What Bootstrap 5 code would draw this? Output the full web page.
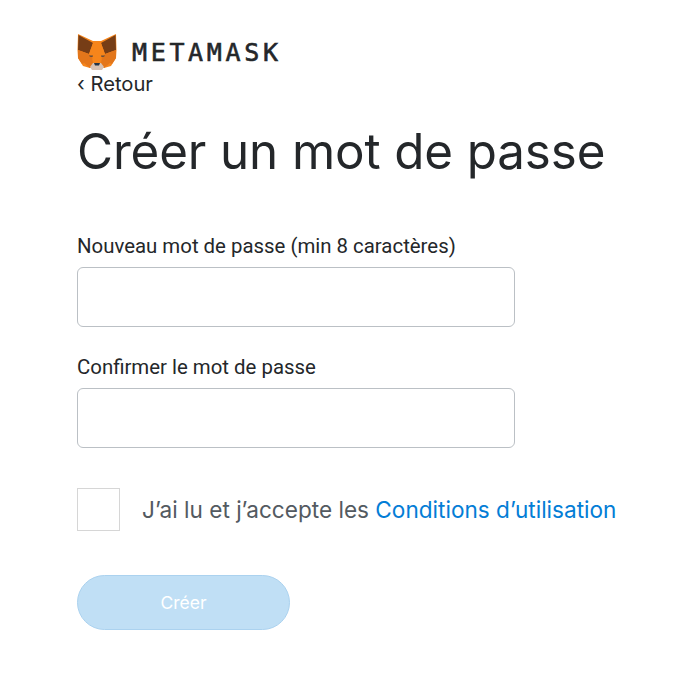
<!DOCTYPE html>
<html lang="fr"><head><meta charset="utf-8"><title>MetaMask</title>
<link rel="stylesheet" href="https://cdn.jsdelivr.net/npm/bootstrap@5.3.0/dist/css/bootstrap.min.css">
<style>
body{background:#fff;color:#24272a;font-family:Inter,sans-serif}
.page-wrap{padding:33px 0 0 77px;width:690px}
.brand-row{height:37px}
.fox-logo{width:40px;height:37px;display:block}
.brand-word{font-family:"DejaVu Sans Mono",monospace;font-weight:400;-webkit-text-stroke:.6px #24272a;font-size:25px;letter-spacing:3.65px;color:#24272a;margin:2px 0 0 15px;line-height:37px}
.back-link{font-size:20.2px;line-height:24px;color:#24272a;text-decoration:none;display:block;margin-top:2px}
.page-title{font-size:49.3px;font-weight:400;line-height:60px;margin:25px 0 0 0;letter-spacing:-.1px}
.field-label{font-family:Roboto,sans-serif;font-size:20.4px;line-height:24px;margin-bottom:9px;display:block;color:#24272a}
.first-field{margin-top:53px}
.next-field{margin-top:28px}
.pw-input{width:438px;height:60px;border:1px solid #bbc0c5;border-radius:6px}
.terms-row{margin-top:40px}
.terms-box{appearance:none;width:43px;height:43px;border:1px solid #d6d6d6;background:#fff;margin:0 22px 0 0;flex:none;display:block}
.terms-text{font-size:22.6px;color:#535a61;white-space:nowrap}
.terms-link{color:#037dd6;text-decoration:none}
.btn.create-btn,.btn.create-btn:disabled{width:213px;height:55px;margin-top:44px;border-radius:100px;background:#c0dff5;border:1px solid #abd2ef;color:#fff;font-size:17.5px;padding:2px 0 0;display:block;opacity:1}
</style></head>
<body>
<main class="page-wrap">
<div class="d-flex align-items-center brand-row">
<svg class="fox-logo" viewBox="0 0 40 37" aria-hidden="true">
<polygon points="1,1 16,8 24,8 39,1 39.5,17 39,25 34,33 27,35 13,35 6,33 1,25 0.5,17" fill="#f6851b"/>
<polygon points="1.5,2 16,10 12,21 1,17" fill="#763d16"/>
<polygon points="38.5,2 24,10 28,21 39,17" fill="#763d16"/>
<polygon points="12,21 1,17 1,25 5,31 16,25" fill="#e2761b"/>
<polygon points="28,21 39,17 39,25 35,31 24,25" fill="#e2761b"/>
<polygon points="16,10 24,10 28,21 24,25 16,25 12,21" fill="#f6851b"/>
<polygon points="6,29 15,25 16,30 13,35" fill="#e4761b"/>
<polygon points="34,29 25,25 24,30 27,35" fill="#e4761b"/>
<polygon points="12,22.5 16,22.5 15.5,24 13,23.8" fill="#5b4a3f"/>
<polygon points="28,22.5 24,22.5 24.5,24 27,23.8" fill="#5b4a3f"/>
<polygon points="13,34 16,30 24,30 27,34 25,37 15,37" fill="#d7c1b3"/>
<polygon points="17,30 23,30 22,32.5 18,32.5" fill="#233447"/>
</svg>
<span class="brand-word">METAMASK</span>
</div>
<a href="#" class="back-link">‹ Retour</a>
<h1 class="page-title">Créer un mot de passe</h1>
<form>
<div class="first-field"><label class="field-label" for="pw1">Nouveau mot de passe (min 8 caractères)</label><input id="pw1" type="password" class="form-control pw-input"></div>
<div class="next-field"><label class="field-label" for="pw2">Confirmer le mot de passe</label><input id="pw2" type="password" class="form-control pw-input"></div>
<div class="d-flex align-items-center terms-row"><input type="checkbox" class="terms-box" id="terms"><label class="terms-text" for="terms">J’ai lu et j’accepte les <a class="terms-link" href="#">Conditions d’utilisation</a></label></div>
<button type="button" class="btn create-btn" disabled>Créer</button>
</form>
</main>
</body></html>
